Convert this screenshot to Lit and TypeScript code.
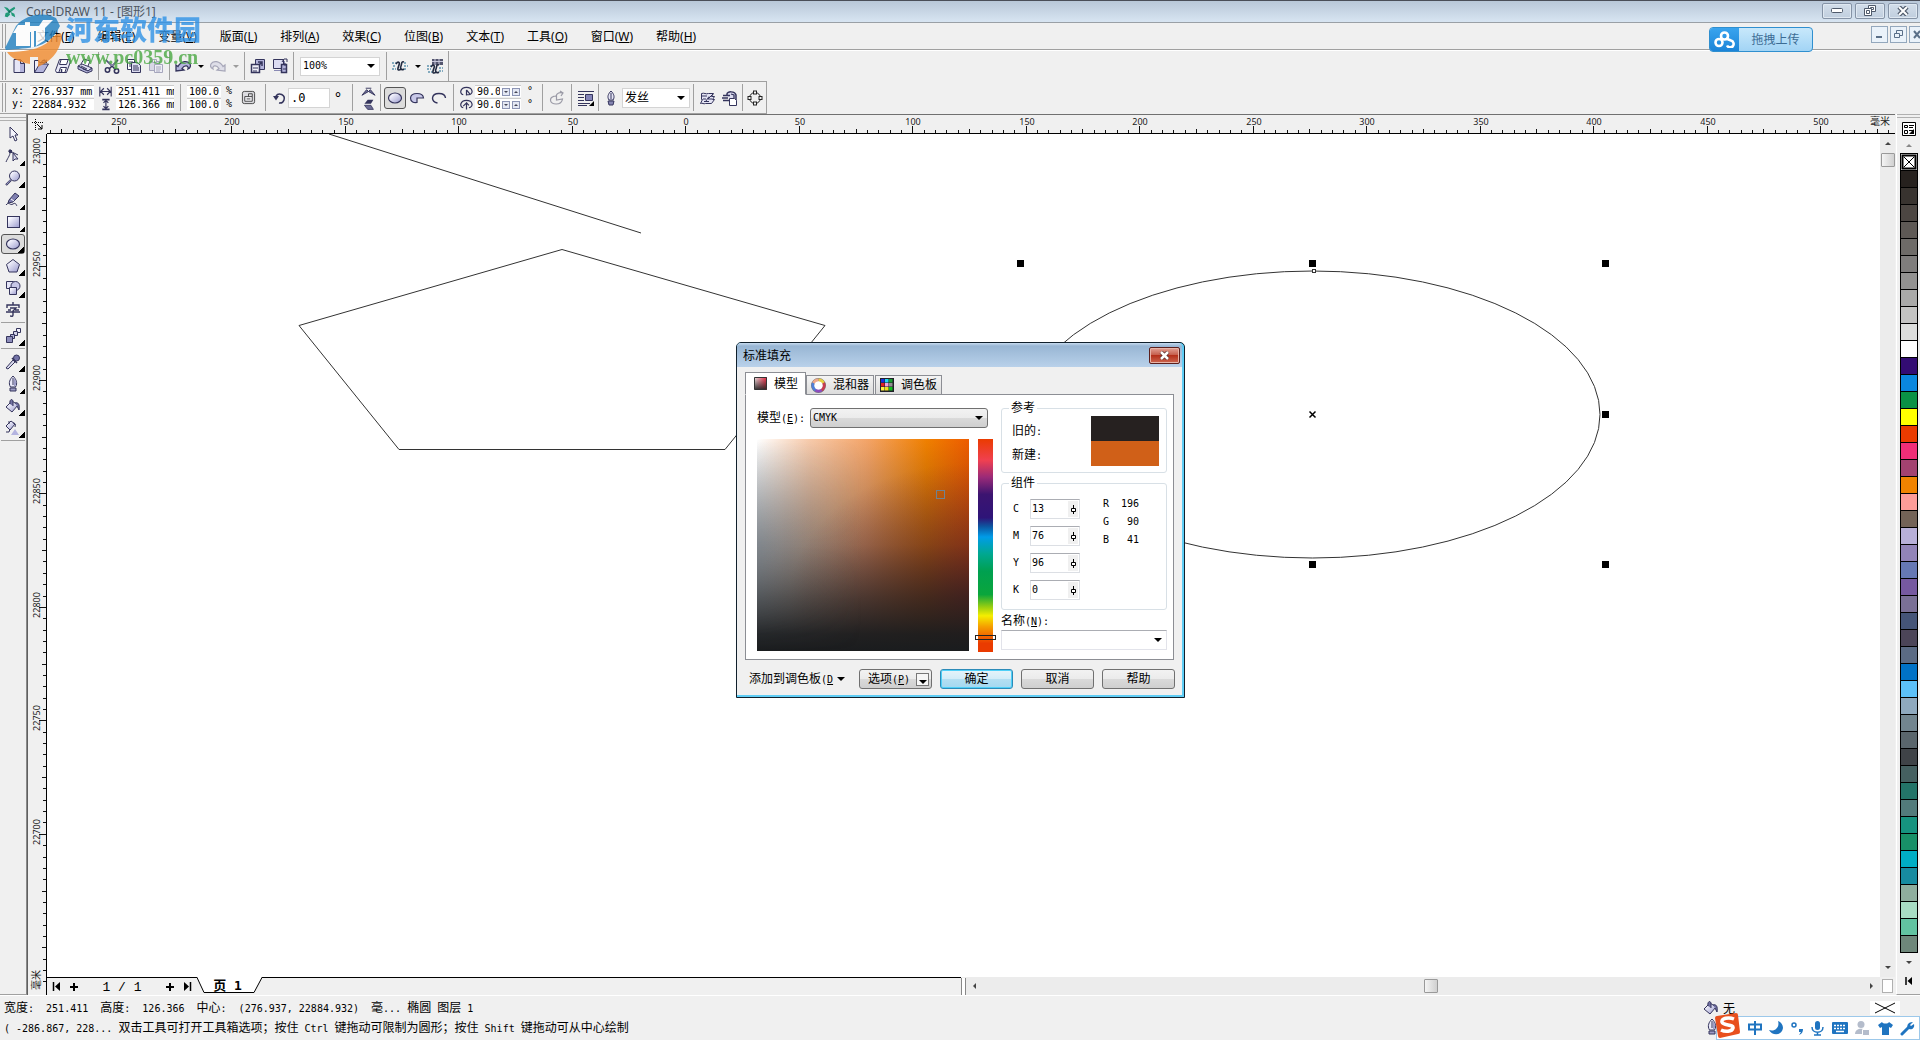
import { LitElement, html, svg, css, TemplateResult, SVGTemplateResult } from "lit";
import { customElement, property } from "lit/decorators.js";

const INK = "#34345c";
const TINT = "#b4b4dc";

const ICONS: Record<string, SVGTemplateResult> = {
  app: svg`<g fill="#1f9a78"><path d="M1 2l4 1 3 3-2 2zM13 2l-5 3 1 3 5-4zM2 13l1-4 4-1 1 3-3 3zM9 8l4 2 1 4-4-2z"/></g><circle cx="7.500" cy="7.500" r="1.500" fill="#0c6d59"/>`,
  new: svg`<path d="M3 1.500h6.500l4 3.500v9.500h-10.500z" fill="#e6e6f6"/><path d="M9 4v10h4.500V5z" fill="${TINT}"/><path d="M9.500 1.500H3v13h10.500V5.500zM9.500 1.500v4h4" fill="none" stroke="${INK}"/>`,
  open: svg`<path d="M1.500 2.500h4l1 2h5l-5 10h-5z" fill="#eeeef8" stroke="${INK}"/><path d="M1.500 14.500L6.500 6h9l-5 8.500z" fill="${TINT}" stroke="${INK}"/><path d="M8 4c2-3 4-3 5-1l1-2v4h-4l2-1c-1-1-2-1-3 0z" fill="${INK}"/>`,
  save: svg`<path d="M4.500 1.500h10l1 2-4 11h-10l-1-2z" fill="#e8e8f6" stroke="${INK}"/><path d="M6 2l-1.500 4.500h7L13 2M4 14l1.500-4.500h6L10 14" fill="#fff" stroke="${INK}"/><path d="M6.500 11v3" stroke="${INK}" stroke-width="1.500"/>`,
  print: svg`<path d="M4 6l3-5 6 2-2 5" fill="#fff" stroke="${INK}"/><path d="M1 8l4-2 10 4-4 3z" fill="#e0e0f2" stroke="${INK}"/><path d="M1 8v3l9 4 5-2v-3l-4 3z" fill="${TINT}" stroke="${INK}"/><path d="M4 8l6 3M6 11l3 1" stroke="${INK}"/>`,
  cut: svg`<path d="M2 2l10 10M14 2L5 11" stroke="${INK}" stroke-width="1.600"/><path d="M2 1l6 7M14 1L8 8" stroke="#8a8ab4"/><circle cx="3.500" cy="12" r="2.200" fill="none" stroke="${INK}" stroke-width="1.500"/><circle cx="12.500" cy="13" r="2.200" fill="none" stroke="${INK}" stroke-width="1.500"/>`,
  copy: svg`<path d="M1.500 1.500h7v10h-7z" fill="#fff" stroke="${INK}"/><path d="M3 4h4M3 6h4M3 8h4" stroke="${INK}"/><path d="M5.500 4.500h6l3 3v7h-9z" fill="#dcdcf0" stroke="${INK}"/><path d="M7 8h5M7 10h6M7 12h6" stroke="${INK}"/>`,
  paste: svg`<g stroke="#a6a6bc"><path d="M1.500 3.500h10v9h-10z" fill="#d8d8e6"/><path d="M4.500 1.500h4v3h-4z" fill="#eee"/><path d="M6.500 6.500h8v8h-8z" fill="#eeeef6"/><path d="M8 9h5M8 11h5M8 13h4"/></g>`,
  undo: svg`<path d="M1 13l0-6 2 1.500C6 3 13 2 15 6c1 2 0 4-2 5 1-3-3-5-6-.500L9 12z" fill="${TINT}" stroke="${INK}" stroke-width="1.300"/>`,
  redo: svg`<path d="M15 13l0-6-2 1.500C10 3 3 2 1 6c-1 2 0 4 2 5-1-3 3-5 6-.500L7 12z" fill="#dedee8" stroke="#a6a6b8" stroke-width="1.200"/>`,
  import: svg`<path d="M5.500 1.500h9v10h-9z" fill="${TINT}" stroke="${INK}"/><path d="M8 4h4v4M12 4L8 8" stroke="${INK}" stroke-width="1.500" fill="none"/><path d="M1.500 6.500h8v8h-8z" fill="#f0f0fa" stroke="${INK}" stroke-width="1.500"/><path d="M3 10h5M4 12v2M6 12v2" stroke="${INK}"/>`,
  export: svg`<path d="M1.500 1.500h10v9h-10z" fill="#dcdcf2" stroke="${INK}"/><path d="M2 12.500h7M12.500 3v3" stroke="#8a8ab4"/><path d="M9.500 6.500h5v8h-5z" fill="${TINT}" stroke="${INK}" stroke-width="1.500"/><path d="M11 11h3M10 4l2-3h3v3M13 8v-3" stroke="${INK}" fill="none"/>`,
  launch: svg`<path d="M0 5h4M1 8h3M0 11h4M12 5h3M12 8h4M12 11h3" stroke="#5f93ad" stroke-width="1.500" stroke-dasharray="2 1"/><path d="M4 6c2-3 4-2 3 1s-2 5 0 5 2-1 2-2M12 4c-3-1-2 2-3 4s0 5 3 3" stroke="#222a40" stroke-width="1.600" fill="none"/>`,
  web: svg`<path d="M5 1h11v6H5z" fill="#54566e"/><path d="M5 3.500h11M8 1v6M12 1v6" stroke="#c8c8dc"/><path d="M0 8h4M0 11h4M1 14h4M12 10h4M12 13h4" stroke="#5f93ad" stroke-width="1.500" stroke-dasharray="2 1"/><path d="M4 9c2-3 4-2 3 1s-2 5 0 5 2-1 2-2M12 7c-3-1-2 2-3 4s0 5 3 3" stroke="#222a40" stroke-width="1.600" fill="none"/>`,
  width: svg`<path d="M1 2v12M15 2v12M2 8h12M6 4L2 8l4 4M10 4l4 4-4 4" fill="none" stroke="${INK}" stroke-width="1.400"/>`,
  height: svg`<path d="M4 2h9M4 14h9" stroke="${INK}" stroke-width="2"/><path d="M8.500 2v12M5.500 6l3-3 3 3M5.500 10l3 3 3-3" fill="none" stroke="${INK}" stroke-width="1.500"/>`,
  lock: svg`<rect x="1.500" y="1.500" width="13" height="13" rx="2" fill="#dcdce0" stroke="#444"/><path d="M4 7h8v5H4z" fill="#f4f4f8" stroke="#444"/><path d="M8 7V4h4v3M6 9.500h4" fill="none" stroke="#444"/>`,
  rotate: svg`<path d="M4 6a4.500 4.500 0 1 1 3 7" fill="none" stroke="${INK}" stroke-width="1.500"/><path d="M1 6h6l-3 4.500z" fill="${INK}"/>`,
  mirrorh: svg`<path d="M1 12L6 6l2 2zM15 12l-5-6-2 2z" fill="#6c6c94" stroke="${INK}"/><path d="M5 4.500h6" stroke="${INK}"/>`,
  mirrorv: svg`<path d="M14 2H7L3 7h8z" fill="${INK}"/><path d="M14 14H7L3 9h8z" fill="#6c6c94" stroke="${INK}"/>`,
  ellipse: svg`<ellipse cx="8" cy="8" rx="6.500" ry="5" fill="url(#lav)" stroke="${INK}" stroke-width="1.200"/>`,
  pie: svg`<path d="M8 8h6.500C14 2 2 2 1.500 8 1.500 12 5 13 8 12.500z" fill="#c8c8e8" stroke="${INK}" stroke-width="1.200"/>`,
  arc: svg`<path d="M14.500 8C14 2 2 2 1.500 8c0 3 2 4.500 5 5" fill="none" stroke="${INK}" stroke-width="1.400"/>`,
  ang1: svg`<path d="M8 6v7M8 6l4 5M4 12C-1 11 0 3 8 3s9 8 3 9H8" fill="none" stroke="${INK}" stroke-width="1.500"/>`,
  ang2: svg`<path d="M8 14V6L4 10M8 6l3 3M4 12C-1 11 0 3 8 3s9 8 3 9" fill="none" stroke="${INK}" stroke-width="1.500"/>`,
  cw: svg`<path d="M13.500 9c-1 7-12 6-12 1 0-3 3-4 6-4v4zM7 6c1-3 4-4 6-3M11 1l3 2-2 3" fill="none" stroke="#9a9aa6" stroke-width="1.200"/>`,
  wrap: svg`<path d="M0 1.500h16M0 4.500h6M0 7.500h6M0 10.500h6M0 13.500h12M0 15.500h9" stroke="${INK}"/><path d="M7.500 4.500h7v6h-7z" fill="#8484b8" stroke="${INK}"/><path d="M16 11v5h-5z"/>`,
  pen: svg`<path d="M8 1c3 3 4 6 2 9H6C4 7 5 4 8 1z" fill="#e4e4f4" stroke="${INK}"/><path d="M8 3v6M5 11h6l-1 4H6z" stroke="${INK}" fill="#8484b0"/>`,
  nib: svg`<path d="M8 0c3 3 5 7 2.500 11h-5C3 7 5 3 8 0z" fill="#e8e8f8" stroke="${INK}"/><path d="M8 2v7M5 12h6v3H5z" stroke="${INK}" fill="#9c9cc4"/><path d="M9 2c2 3 3 6 1 8H9z" fill="#9c9cc8"/>`,
  front: svg`<path d="M1.500 3.500c3-1 4 1 7 0h5l-2 3h3l-2 3h2l-3 4h-6c-2 1-3-1-5 0l2-4h-1z" fill="#e4e4f4" stroke="${INK}"/><path d="M2 6h5M3 9h3M4 11.500h5M9 6.500L6 11M13 4L8 9h4" stroke="${INK}" fill="none"/>`,
  back: svg`<path d="M5 6V4c0-3 8-3 9 1v8" fill="#dcdcf0" stroke="${INK}" stroke-width="1.500"/><path d="M7.500 8.500h5l2 2v5h-7z" fill="#fff" stroke="${INK}"/><path d="M1 5.500h7M0 8h6M1 10.500h6M9 4l3 1v3" fill="none" stroke="${INK}" stroke-width="1.300"/>`,
  curves: svg`<circle cx="8" cy="8" r="5.500" fill="none" stroke="#222"/><g fill="#f4f4f4" stroke="#222"><rect x="6.500" y="1" width="3" height="3"/><rect x="6.500" y="12" width="3" height="3"/><rect x="1" y="6.500" width="3" height="3"/><rect x="12" y="6.500" width="3" height="3"/></g>`,
  pick: svg`<path d="M5 1v11l3-2 2 5 2-1-2-5h3z" fill="#f4f4fc" stroke="${INK}"/>`,
  shape: svg`<path d="M1 14C3 9 6 7 5 1M3 3l4 1 6 3" fill="none" stroke="${INK}"/><path d="M8 5v8l2-2h3z" fill="#d8d8ee" stroke="${INK}"/><rect x="4" y="2" width="3" height="3" fill="${INK}"/>`,
  zoom: svg`<circle cx="9.500" cy="6" r="5" fill="url(#lav)" stroke="${INK}"/><path d="M6 10L1 15" stroke="${INK}" stroke-width="2.200"/><path d="M5.500 10L1.500 14.500" stroke="#a0a0cc"/>`,
  draw: svg`<path d="M4 8l6-7 4 3-6 6-5 1z" fill="#8080b0" stroke="${INK}"/><path d="M6 7l3 2" stroke="#fff"/><path d="M1 13c3-4 4 1 7-1s3 1 4 2" fill="none" stroke="${INK}"/>`,
  rect: svg`<rect x="2.500" y="2.500" width="12" height="11" fill="url(#lav)" stroke="${INK}"/>`,
  poly: svg`<path d="M8 1.500l6.500 5-2.500 7.500H4L1.500 6.500z" fill="url(#lav)" stroke="${INK}"/>`,
  basic: svg`<path d="M1.500 1.500h7v7h-7z" fill="#e4e4f6" stroke="${INK}"/><circle cx="10.500" cy="6" r="4.500" fill="#c8c8e8" stroke="${INK}"/><path d="M4.500 7.500h7v7h-7z" fill="url(#lav)" stroke="${INK}"/>`,
  text: svg`<path d="M8 0v3M2 6V3h12v3M5 6h6L8 9v4c0 2-2 1-3 1M1 10h14M3 8h3M10 8h4" fill="none" stroke="${INK}" stroke-width="1.400"/>`,
  blend: svg`<g stroke="${INK}"><path d="M11.500.500h4v4h-4z" fill="#f0f0fa"/><path d="M8.500 3.500h4v4h-4z" fill="#d4d4ea"/><path d="M5.500 6.500h4v4h-4z" fill="#b0b0d4"/><path d="M1.500 8.500h6v6h-6z" fill="#8c8cba"/></g>`,
  dropper: svg`<path d="M1 14l7-8 2 2-7 7z" fill="#d8d8ec" stroke="${INK}"/><circle cx="11.500" cy="4" r="3" fill="#7474a8" stroke="${INK}"/><path d="M7 4l5 5" stroke="${INK}" stroke-width="1.500"/>`,
  fill: svg`<path d="M1 9l6-6 6 4-6 7z" fill="url(#lav)" stroke="${INK}"/><path d="M5 6c-1-5 3-6 3-2v4M10 5c3-1 5 1 4 7-1-1-1-3-2-4" fill="#7272a4" stroke="${INK}"/>`,
  ifill: svg`<path d="M1 6l5-5 4 3-5 6z" fill="url(#lav)" stroke="${INK}"/><path d="M8 3c2 0 3 1 2 4M4 4V1" fill="none" stroke="${INK}"/><path d="M1 12h3l1-3" fill="none" stroke="${INK}"/><path d="M10 9l4 6H6z" fill="#b4b4e0"/>`,
};

const icon = (name: string, size = 16, flyout = false): TemplateResult => html`
  <svg class="ic" width=${size} height=${size} viewBox="0 0 16 16" aria-hidden="true">
    <defs><linearGradient id="lav" x1="0" y1="0" x2="1" y2="1"><stop offset=".2" stop-color="#f6f6fe"/><stop offset="1" stop-color="#9898cc"/></linearGradient></defs>
    ${ICONS[name]}
  </svg>${flyout ? html`<i class="fly"></i>` : ""}`;

/* Sets Latin runs in the half-width face and leaves Chinese runs at full size. */
const mix = (text: string) =>
  text.split(/([\u3000-\uffef]+)/).map((run, i) => (i % 2 ? run : run ? html`<span class="l">${run}</span>` : ""));

const keyed = (label: string, key: string, tail = "") => html`${label}<span class="l">(<u>${key}</u>)${tail}</span>`;

const MENUS: [string, string][] = [
  ["文件", "F"], ["编辑", "E"], ["变量", "V"], ["版面", "L"], ["排列", "A"], ["效果", "C"],
  ["位图", "B"], ["文本", "T"], ["工具", "O"], ["窗口", "W"], ["帮助", "H"],
];

const PALETTE = (
  "26211e 38332f 4c4642 5e5955 6e6b68 7f7d7c 939291 a9a9a8 c3c3c2 dcdddc ffffff 330c73 0a87de 0a9245 ffff00 ea3b00 " +
  "f02e77 a34270 f08300 fc9c98 736357 b8b0d8 9284b8 6678b4 7659a0 7a7096 455578 4c4558 5b6b84 0072c6 5cc0f8 8fa9be " +
  "72858f 5a666c 3f4347 456060 237468 527b7b 16937f 189068 00adc4 178ba0 8fae9e a8dcc4 62c3a1 6e877a"
).split(" ");

const shared = css`
  * { box-sizing: border-box; }
  button, input, select { font: inherit; color: inherit; margin: 0; padding: 0; border: 0; border-radius: 0; background: none; min-width: 0; }
  select { appearance: none; }
  svg { display: block; }
  .l { font-family: "DejaVu Sans Mono", monospace; font-size: 10px; line-height: 1; white-space: pre; }
  .combo { display: inline-grid; align-items: center; }
  .combo > * { grid-area: 1 / 1; }
  .combo select { width: 100%; height: 100%; padding-left: 2px; }
  .combo i, .tri { width: 0; height: 0; border: 4px solid transparent; border-top-color: #000; border-bottom: 0; }
  .combo i { justify-self: end; margin-right: 4px; pointer-events: none; }
`;

@customElement("hue-dialog")
export class HueDialog extends LitElement {
  static styles = [shared, css`
    :host { box-sizing: border-box; display: block; width: 449px; border: 1px solid #10202c; border-radius: 5px 5px 0 0; font: 12px/16px "DejaVu Sans Mono", "Noto Sans CJK SC", sans-serif; color: #000; background: #5fcdf5; padding: 0 2px 2px 0; }
    header { display: flex; align-items: center; justify-content: space-between; height: 24px; padding: 0 2px 0 6px; background: linear-gradient(#c8dcf0 0, #98b6d4 3px, #b9d1ea); border-radius: 4px 4px 0 0; }
    header h2 { margin: 0; font: 12px/16px "Noto Sans CJK SC", sans-serif; }
    .x { width: 31px; height: 17px; border: 1px solid #5c1f1c; border-radius: 2px; background: linear-gradient(#e3a194, #c6604e 45%, #b5301b 50%, #cc6750); display: grid; place-items: center; box-shadow: inset 0 0 0 1px #e8b4a8; }
    .body { background: #f0f0f0; padding: 5px 8px 6px; }
    .tabs { display: flex; align-items: flex-end; height: 23px; margin-bottom: -1px; }
    .tab { display: flex; align-items: center; gap: 7px; height: 20px; padding: 0 4px; border: 1px solid #8c8e94; margin-right: 1px; background: linear-gradient(#f4f4f4, #dcdcdc); white-space: nowrap; }
    .tab.on { height: 23px; background: #fff; border-bottom-color: #fff; padding: 0 7px 0 8px; margin-right: 0; position: relative; }
    .panel { display: grid; grid-template-columns: auto 1fr; gap: 5px; border: 1px solid #8c8e94; background: #fff; padding: 13px 6px 7px 11px; }
    .left { display: grid; grid-template-columns: 212px 21px; column-gap: 6px; row-gap: 11px; align-content: start; }
    .model { grid-column: 1 / 3; display: flex; align-items: center; justify-content: space-between; padding-right: 8px; height: 20px; }
    .model .combo { width: 178px; height: 20px; border: 1px solid #707070; border-radius: 3px; background: linear-gradient(#f2f2f2, #ebebeb 50%, #dadada 50%, #cfcfcf); }
    .combo select { font: 10px/14px "DejaVu Sans Mono", monospace; }
    .field { position: relative; height: 212px; background:
      linear-gradient(rgba(26,28,30,0), rgba(26,28,30,.38) 50%, rgba(26,28,30,.74) 75%, rgba(26,28,30,.96) 92%, #1a1c1e),
      radial-gradient(ellipse at 100% 75%, rgba(110,10,60,.55), rgba(130,20,50,0) 60%),
      linear-gradient(90deg, #fff, #f8cbab 25%, #f4a468 52%, #f08000 80%, #ee5c00); }
    .field::before { content: ""; display: block; height: 100%; background: linear-gradient(90deg, rgba(70,85,100,.4), rgba(70,85,100,0) 50%); -webkit-mask-image: linear-gradient(transparent, #000 50%, transparent); mask-image: linear-gradient(transparent, #000 50%, transparent); }
    .pin { position: absolute; left: 179px; top: 51px; width: 9px; height: 9px; border: 1px solid #6f8290; }
    .hue { appearance: none; writing-mode: vertical-lr; width: 21px; height: 213px; background: linear-gradient(#ea3b00, #f04050 10%, #9a2a78 18%, #3c1470 26%, #2e1478 37%, #0d55a0 41%, #009ce8 46%, #00a890 54%, #00a050 62%, #0aa63c 73%, #9ccf10 79%, #f5ee00 83%, #f5a000 88%, #f06000 93%, #ea3b00 96%) center / 15px 100% no-repeat; }
    .hue::-webkit-slider-thumb { appearance: none; width: 21px; height: 5px; border: 1px solid #222; background: linear-gradient(90deg, #fff 2px, transparent 2px, transparent 17px, #fff 17px); }
    .right { display: flex; flex-direction: column; }
    fieldset { margin: 0; padding: 0 7px 0 10px; border: 1px solid #d8e0e6; border-radius: 3px; min-width: 0; }
    legend { margin-left: -3px; padding: 0 2px; line-height: 16px; }
    .ref { height: 73px; margin-top: -8px; display: block; }
    .refrow { display: flex; justify-content: space-between; }
    .refrow p { margin: 0; padding-top: 7px; height: 24px; line-height: 16px; }
    .chips { width: 68px; height: 50px; background: linear-gradient(#262120 50%, #d06018 50%); }
    .comp { height: 135px; margin-top: 2px; }
    .comprow { display: flex; gap: 23px; }
    .chan { display: grid; gap: 7px; font-size: 10px; padding-top: 8px; }
    .chan label { display: grid; grid-template-columns: 17px 50px; align-items: center; height: 20px; padding-left: 1px; }
    .spin { display: flex; height: 20px; border: 1px solid #dcdfe4; border-top-color: #abadb3; }
    .spin input { width: 36px; padding-left: 1px; }
    .spin button { width: 10px; background: #f0f0f0; margin: 1px; display: grid; place-items: center; }
    .rgb { margin: 0; padding-top: 4px; display: grid; grid-template-columns: 6px 30px; font-size: 10px; grid-auto-rows: 18px; align-content: start; line-height: 18px; }
    .rgb dd, .rgb dt { margin: 0; }
    .rgb dd { text-align: right; }
    .name { display: grid; grid-template-rows: 16px 20px; gap: 1px; padding-top: 3px; }
    .name .combo { height: 20px; border: 1px solid #e2e3ea; border-top-color: #abadb3; }
    footer { display: flex; align-items: center; gap: 8px; padding: 9px 0 0 4px; margin-right: -2px; }
    footer button { height: 20px; flex: 0 0 73px; border: 1px solid #707070; border-radius: 3px; background: linear-gradient(#f2f2f2, #ebebeb 50%, #dadada 50%, #cfcfcf); white-space: nowrap; }
    footer .add { flex: 0 0 102px; border: 0; background: none; display: flex; align-items: center; gap: 4px; }
    footer .opt { display: flex; align-items: center; justify-content: space-between; padding: 0 2px 0 8px; }
    footer .opt b { width: 13px; height: 13px; border: 1px solid #777; display: grid; place-items: end center; background: #f6f6f6; padding-bottom: 1px; }
    footer .ok { border-color: #2c8bb8; background: linear-gradient(#e6f4fa, #d2ecf8 50%, #b4dff2 50%, #a4d8f0); box-shadow: inset 0 0 0 1px #4fd0f8; }
  `];

  render() {
    const chans: [string, string][] = [["C", "13"], ["M", "76"], ["Y", "96"], ["K", "0"]];
    return html`
      <header>
        <h2>标准填充</h2>
        <button class="x" aria-label="关闭"><svg width="11" height="9" viewBox="0 0 11 9"><path d="M2 1l7 7M9 1L2 8" stroke="#5a3030" stroke-width="4"/><path d="M2 1l7 7M9 1L2 8" stroke="#fff" stroke-width="2.500"/></svg></button>
      </header>
      <div class="body">
        <div class="tabs" role="tablist">
          <button class="tab on" role="tab" aria-selected="true">
            <svg width="13" height="13" viewBox="0 0 13 13"><defs><linearGradient id="m1" x2="1"><stop stop-color="#eee"/><stop offset="1" stop-color="#f0203c"/></linearGradient><linearGradient id="m2" x2="0" y2="1"><stop stop-color="#222" stop-opacity="0"/><stop offset="1" stop-color="#222" stop-opacity=".9"/></linearGradient></defs><path d="M0 0h13v13H0z" fill="url(#m1)"/><path d="M.5.500h12v12H.5z" fill="url(#m2)" stroke="#333"/></svg>模型
          </button>
          <button class="tab" role="tab" aria-selected="false">
            <svg width="15" height="15" viewBox="0 0 15 15" fill="none" stroke-width="3"><circle cx="7.500" cy="7.500" r="6" stroke="#777" stroke-width="3"/><path d="M7.500 2a5.500 5.500 0 0 1 5 3" stroke="#e8d040"/><path d="M12.500 5a5.500 5.500 0 0 1-2 7" stroke="#c83c50"/><path d="M10.500 12a5.500 5.500 0 0 1-6 0" stroke="#8c4cc0"/><path d="M4.500 12a5.500 5.500 0 0 1-2-7" stroke="#5080d8"/><path d="M2.500 5a5.500 5.500 0 0 1 5-3" stroke="#f0a888"/><circle cx="7.500" cy="7.500" r="4" fill="#fff"/></svg>混和器
          </button>
          <button class="tab" role="tab" aria-selected="false">
            <svg width="14" height="14" viewBox="0 0 14 14"><path d="M0 0h14v14H0z" fill="#202028"/>
              ${["#1830e0", "#20d8f0", "#18a030", "#e02020", "#f0a0e0", "#909090", "#fff040", "#f0e020", "#10c020"].map((c, i) => svg`<path d="M${1 + (i % 3) * 4} ${1 + Math.floor(i / 3) * 4}h3.500v3.500h-3.500z" fill=${c}></path>`)}
            </svg>调色板
          </button>
        </div>
        <div class="panel">
          <div class="left">
            <div class="model">
              <label for="model">${keyed("模型", "E", ":")}</label>
              <span class="combo"><select id="model"><option>CMYK</option></select><i></i></span>
            </div>
            <div class="field"><span class="pin"></span></div>
            <input class="hue" type="range" min="0" max="100" value="94" aria-label="色相">
          </div>
          <div class="right">
            <fieldset class="ref">
              <legend>参考</legend>
              <div class="refrow"><div><p>旧的<span class="l">:</span></p><p>新建<span class="l">:</span></p></div><div class="chips"></div></div>
            </fieldset>
            <fieldset class="comp">
              <legend>组件</legend>
              <div class="comprow">
                <div class="chan">
                  ${chans.map(([n, v]) => html`<label>${n}<span class="spin"><input .value=${v} aria-label=${n}><button tabindex="-1" aria-label="调整 ${n}"><svg width="5" height="9" viewBox="0 0 5 9"><path d="M2.500 0v9" stroke="#000"/><path d="M.5 3.500h4v3h-4z" fill="#fff" stroke="#000"/></svg></button></span></label>`)}
                </div>
                <dl class="rgb"><dt>R</dt><dd>196</dd><dt>G</dt><dd>90</dd><dt>B</dt><dd>41</dd></dl>
              </div>
            </fieldset>
            <div class="name">
              <label for="cname">${keyed("名称", "N", ":")}</label>
              <span class="combo"><select id="cname"><option></option></select><i></i></span>
            </div>
          </div>
        </div>
        <footer>
          <button class="add"><span>添加到调色板<span class="l">(<u>D</u></span></span><i class="tri"></i></button>
          <button class="opt"><span>${keyed("选项", "P")}</span><b><i class="tri"></i></b></button>
          <button class="ok">确定</button><button>取消</button><button>帮助</button>
        </footer>
      </div>`;
  }
}

@customElement("unit-ruler")
export class UnitRuler extends LitElement {
  @property({ type: Boolean }) vertical = false;

  static styles = css`
    :host { box-sizing: border-box; display: block; overflow: hidden; background: #f0f0f0; min-width: 0; min-height: 0; }
    svg { display: block; width: 100%; height: 100%; overflow: visible; }
    text { font: 9px "Noto Sans", sans-serif; fill: #222; text-anchor: middle; }
    .unit { font: 10px "Noto Sans CJK SC", sans-serif; }
    .end { text-anchor: end; }
  `;

  render() {
    const step = 113.47;
    const ticks: SVGTemplateResult[] = [];
    const v = this.vertical;
    const origin = v ? 19 : 71;
    const labels = v ? 6 : 15;
    for (let n = -9; n <= 160; n++) {
      const p = Math.round(origin + (n * step) / 10);
      if (p < 2 || (v && p > 858)) continue;
      const labelled = n % 10 === 0 && n / 10 <= labels;
      const len = labelled ? 7 : n % 5 === 0 ? 4 : 3;
      ticks.push(v
        ? svg`<path d="M${18 - len} ${p}.5h${len}" stroke="#111"></path>`
        : svg`<path d="M${p}.5 ${18 - len}v${len}" stroke="#111"></path>`);
      if (labelled) {
        const k = n / 10;
        ticks.push(v
          ? svg`<text transform="translate(12 ${p - 2}) rotate(-90)">${23000 - k * 50}</text>`
          : svg`<text x=${p + 1} y="10">${Math.abs(250 - k * 50)}</text>`);
      }
    }
    return html`<svg aria-hidden="true">${ticks}${v
      ? svg`<svg y="100%"><text class="unit" transform="translate(12 -15) rotate(-90)">毫米</text></svg>`
      : svg`<text class="unit end" x="100%" dx="-5" y="10">毫米</text>`}</svg>`;
  }
}

@customElement("app-root")
export class AppRoot extends LitElement {
  static styles = [shared, css`
    :host { position: relative; display: flex; flex-direction: column; min-height: 100vh; box-sizing: border-box; overflow: hidden; background: #f0f0f0; color: #000; font: 12px/16px "Noto Sans", "Noto Sans CJK SC", sans-serif; }
    .title { display: flex; align-items: center; height: 23px; border-top: 1px solid #4a4e58; border-bottom: 1px solid #9aa0a6; background: linear-gradient(#b8c7d8, #d8e5f2); padding-left: 3px; gap: 9px; color: #4c5560; }
    .title h1 { margin: 0; font: inherit; flex: 1; }
    .wins { display: flex; gap: 3px; padding: 0 2px 2px 0; }
    .wins button { width: 30px; height: 16px; border: 1px solid #8593a6; border-radius: 2px; display: grid; place-items: center; background: linear-gradient(#d3deea, #c0cede); box-shadow: inset 0 0 0 1px #dfe8f1; }
    .menu { display: flex; align-items: center; height: 27px; border-bottom: 1px solid #a0a0a0; padding-left: 2px; }
    .grip { align-self: stretch; width: 4px; border-left: 1px solid #a0a0a0; border-right: 1px solid #a0a0a0; margin: 1px 0; }
    .menu nav { display: flex; gap: 23px; padding: 2px 0 0 31px; flex: 1; }
    .menu a { color: inherit; text-decoration: none; white-space: nowrap; }
    .mdi { display: flex; gap: 2px; margin-right: -6px; padding-bottom: 4px; }
    .mdi button { width: 17px; height: 17px; border: 1px solid #93a7bc; background: #eaf2fa; display: grid; place-items: center; }
    .bar { display: flex; align-items: center; height: 31px; padding-left: 2px; border-top: 1px solid #fff; }
    .bar hr { width: 1px; height: 28px; border: 0; margin: 0 2px; background: #a0a0a0; flex: none; }
    .group { display: flex; align-items: center; padding: 0 2px; height: 30px; border-right: 1px solid #a0a0a0; }
    .tb { width: 22px; height: 22px; display: grid; place-items: center; flex: none; }
    .drop { width: 13px; height: 24px; display: grid; place-items: center; }
    .drop.off { opacity: .35; }
    .drop .tri { border-width: 3px; border-bottom: 0; }
    .zoom { width: 80px; height: 19px; background: #fff; border: 1px solid #d4d4d4; margin: 0 4px; font: 10px/14px "DejaVu Sans Mono", monospace; }
    .prop { display: flex; align-items: center; height: 33px; padding-left: 2px; border: solid #a0a0a0; border-width: 1px 1px 1px 0; width: max-content; }
    .prop hr { width: 1px; height: 27px; border: 0; background: #a0a0a0; margin: 0 3px; flex: none; }
    .prop hr.m6 { margin: 0 6px; }
    .prop hr.m1 { margin: 0 1px; }
    .w13 { width: 13px; } .w16 { width: 16px; } .w18 { width: 18px; } .w22 { width: 22px; } .w24 { width: 24px; }
    .w34 { width: 34px; } .w58 { width: 58px; } .w64 { width: 64px; }
    .stack { display: grid; grid-auto-rows: 13px; align-items: center; font: 10px/12px "DejaVu Sans Mono", monospace; }
    .stack input, .stack .sp { background: #fff; height: 12px; border-top: 1px solid #ccc; padding-left: 2px; overflow: hidden; width: 100%; }
    .stack svg { margin: auto; }
    .stack label, .stack .o { display: block; text-align: center; }
    .stack .sp { display: flex; align-items: center; gap: 2px; width: 46px; }
    .stack .sp input { width: 23px; border: 0; padding: 0; }
    .sp button { width: 8px; height: 8px; border: 1px solid #8c94b4; background: #e4e8f4; display: grid; place-items: center; }
    .sp button i { border: 2px solid transparent; border-top-color: #445; border-bottom: 0; }
    .sp button i.up { border: 2px solid transparent; border-bottom-color: #445; border-top: 0; }
    .rot { width: 42px; height: 20px; background: #fff; border: 1px solid #d4d4d4; padding-left: 2px; font: 12px/16px "DejaVu Sans Mono", monospace; }
    .deg { width: 16px; text-align: center; font-size: 14px; }
    .pressed { border: 1px solid #555; border-radius: 3px; background: #dcdcdc; }
    .line { width: 68px; height: 20px; background: #fff; border: 1px solid #d4d4d4; }
    .work { flex: 1; display: flex; min-height: 0; }
    .tools { width: 27px; flex: none; display: flex; flex-direction: column; align-items: center; padding-top: 3px; border-right: 1px solid #8a8a8a; border-bottom: 1px solid #a0a0a0; }
    .tools hr { width: 24px; height: 1px; border: 0; margin: 1px 0; background: #a0a0a0; flex: none; }
    .tools .cap { width: 100%; height: 4px; border-top: 1px solid #b0b0b0; border-bottom: 1px solid #b0b0b0; margin: 0 0 2px; background: none; }
    .tool { width: 24px; height: 22px; flex: none; display: grid; align-items: center; justify-items: center; padding-bottom: 1px; }
    .tool > * { grid-area: 1 / 1; }
    .tool.pressed { height: 20px; margin: 1px 0; padding: 0; }
    .gap { height: 1px; }
    .fly { align-self: end; justify-self: end; width: 6px; height: 6px; background: linear-gradient(135deg, transparent 50%, #000 50%); }
    .doc { flex: 1; min-width: 0; display: grid; grid-template: 19px 1fr 18px / 19px 1fr 15px; border-left: 1px solid #606060; border-top: 1px solid #707070; }
    .corner { display: grid; place-items: center; }
    .hr { grid-column: 2 / 4; border-bottom: 1px solid #000; }
    .vr { grid-row: 2 / 4; grid-column: 1; border-right: 1px solid #000; }
    .canvas { background: #fff; overflow: hidden; min-width: 0; min-height: 0; position: relative; }
    .canvas svg { position: absolute; }
    .vs { background: #ececec; display: flex; flex-direction: column; align-items: center; padding: 8px 0; }
    .arr { width: 0; height: 0; border: 3px solid transparent; }
    .arr.up { border-bottom-color: #444; border-top: 0; } .arr.dn { border-top-color: #444; border-bottom: 0; }
    .arr.lf { border-right-color: #444; border-left: 0; } .arr.rt { border-left-color: #444; border-right: 0; }
    .pal .arr.up { border-bottom-color: #888; }
    .thumb { width: 14px; height: 14px; border: 1px solid #999; border-radius: 1px; background: linear-gradient(90deg, #f4f4f4, #d0d0d0); }
    .vs .thumb { margin: 8px 0 auto; }
    .pages { grid-column: 2; display: flex; min-width: 0; }
    .pnav { flex: 1; display: flex; border-top: 1px solid #000; min-width: 0; }
    .nums { display: flex; align-items: center; width: 150px; font: 13px/16px "Liberation Mono", monospace; }
    .nums span { flex: 1; text-align: center; padding-top: 3px; }
    .nums button { width: 18px; height: 16px; display: grid; place-items: center; }
    .ptab { display: grid; width: 65px; height: 17px; margin-top: -1px; }
    .ptab > * { grid-area: 1 / 1; }
    .ptab a { place-self: center; padding-right: 4px; color: #000; text-decoration: none; font: bold 13px/16px "DejaVu Sans Mono", "Noto Sans CJK SC", sans-serif; z-index: 1; }
    .split { width: 5px; border-right: 1px solid #888; border-left: 1px solid #888; background: #fff; margin-top: 1px; }
    .hs { flex: 1; display: flex; align-items: center; background: #ececec; min-width: 0; }
    .hs .lf { margin-left: 7px; } .hs .rt { margin-right: 7px; }
    .hs .thumb { margin-left: 49%; margin-right: auto; }
    .nav { border: 1px solid #b0b0b0; background: #fff; margin: 2px; }
    .pal { width: 24px; flex: none; display: flex; flex-direction: column; align-items: center; border-left: 1px solid #fff; margin-left: 1px; border-bottom: 1px solid #a0a0a0; }
    .pal .cap { width: 100%; height: 4px; border-top: 1px solid #b0b0b0; border-bottom: 1px solid #b0b0b0; }
    .pal .opts { margin: 4px 0 8px; }
    .pal ul { list-style: none; margin: 6px 0 0; padding: 0; border: solid #000; border-width: 1px 1px 0; width: 18px; }
    .pal li { height: 17px; border-bottom: 1px solid #000; }
    .pal li button { width: 100%; height: 100%; display: block; }
    .pal .arr.dn { margin: 8px 0 13px; }
    .status { height: 45px; border-top: 1px solid #fff; display: flex; justify-content: space-between; font-family: "Noto Sans CJK SC", sans-serif; padding-left: 4px; }
    .status p { margin: 0; height: 20px; line-height: 20px; white-space: pre; }
    .status p:first-child { margin-top: 1px; }
    .info { width: 217px; display: flex; padding-right: 20px; height: 23px; gap: 4px; align-items: center; }
    .none { width: 30px; height: 14px; background: #fff; margin-left: auto; }
    .nibpos { position: absolute; right: 200px; bottom: 5px; }
    .ime { position: absolute; right: 0; bottom: 0; width: 204px; height: 24px; display: flex; align-items: center; justify-content: space-between; padding: 0 4px 0 31px; background: #fff; border: 1px solid #9cc8ea; }
    .logo { position: absolute; left: -3px; top: -5px; }
    .mark { position: absolute; left: 5px; top: 12px; display: flex; pointer-events: none; opacity: .8; }
    .mark div { display: flex; flex-direction: column; padding-left: 4px; }
    .mark strong { font: 900 27px/34px "Noto Sans CJK SC", sans-serif; color: #2f92e6; white-space: nowrap; }
    .mark span { font: bold 20px/22px "Liberation Serif", serif; color: #4aa843; }
    .upload { position: absolute; right: 107px; top: 27px; width: 104px; height: 25px; display: flex; align-items: center; border: 1px solid #2f8fcf; border-radius: 4px; overflow: hidden; background: linear-gradient(#c8e8fb, #a2d4f5); color: #3c6c94; }
    .upload b { width: 29px; height: 100%; background: linear-gradient(#3aa4ee, #1b84d8); display: grid; place-items: center; }
    .upload span { flex: 1; text-align: center; }
    hue-dialog { position: absolute; left: 736px; top: 342px; }
  `];

  private tb(name: string, label: string) {
    return html`<button class="tb" aria-label=${label}>${icon(name)}</button>`;
  }

  private tool(name: string, label: string, fly = true, pressed = false) {
    return html`<button class="tool ${pressed ? "pressed" : ""}" aria-label=${label}>${icon(name, 16, fly)}</button>`;
  }

  private handles: [number, number][] = [[1020, 263], [1312, 263], [1605, 263], [1605, 414], [1312, 564], [1605, 564], [1020, 564]];

  render() {
    return html`
      <header class="title">
        ${icon("app", 14)}<h1>CorelDRAW 11 - [图形1]</h1>
        <div class="wins">
          <button aria-label="最小化"><svg width="12" height="5"><rect x=".5" y=".5" width="11" height="4" rx="1" fill="#fff" stroke="#4f5a6b"/></svg></button>
          <button aria-label="还原"><svg width="12" height="11" fill="#fff" stroke="#4f5a6b"><path d="M4.500.500h7v6h-7z"/><path d="M6.500 2.500h3v2h-3z"/><path d="M.500 3.500h7v7h-7z"/><path d="M2.500 5.500h3v3h-3z"/></svg></button>
          <button aria-label="关闭"><svg width="12" height="10"><path d="M2 1l8 8M10 1L2 9" stroke="#4f5a6b" stroke-width="4.500"/><path d="M2 1l8 8M10 1L2 9" stroke="#fff" stroke-width="2"/></svg></button>
        </div>
      </header>

      <div class="menu">
        <span class="grip"></span>
        <nav>${MENUS.map(([t, k]) => html`<a href="#">${t}(<u>${k}</u>)</a>`)}</nav>
        <div class="mdi">
          <button aria-label="最小化文档"><svg width="9" height="9"><path d="M1 7h6" stroke="#5a6f88" stroke-width="2"/></svg></button>
          <button aria-label="还原文档"><svg width="9" height="9" fill="none" stroke="#5a6f88"><path d="M2.500 3V.500h6v5H6M.500 3.500h5v4h-5z"/></svg></button>
          <button aria-label="关闭文档"><svg width="9" height="9"><path d="M1 1l6 7M7 1L1 8" stroke="#5a6f88" stroke-width="2"/></svg></button>
        </div>
      </div>

      <div class="bar" role="toolbar">
        <span class="grip"></span>
        <div class="group">
          ${this.tb("new", "新建")}${this.tb("open", "打开")}${this.tb("save", "保存")}${this.tb("print", "打印")}<hr>
          ${this.tb("cut", "剪切")}${this.tb("copy", "复制")}${this.tb("paste", "粘贴")}<hr>
          ${this.tb("undo", "撤消")}<button class="drop" aria-label="撤消列表"><i class="tri"></i></button>
          ${this.tb("redo", "重做")}<button class="drop off" aria-label="重做列表"><i class="tri"></i></button><hr>
          ${this.tb("import", "导入")}${this.tb("export", "导出")}<hr>
          <span class="combo zoom"><select aria-label="缩放级别"><option>100%</option></select><i></i></span><hr>
          ${this.tb("launch", "应用程序启动器")}<button class="drop" aria-label="启动器列表"><i class="tri"></i></button>
          ${this.tb("web", "图形社区")}
        </div>
      </div>

      <div class="prop" role="toolbar">
        <span class="grip"></span>
        ${this.renderProps()}
      </div>

      <div class="work">
        <div class="tools" role="toolbar">
          <hr class="cap">
          ${this.tool("pick", "挑选", false)}${this.tool("shape", "形状")}${this.tool("zoom", "缩放")}${this.tool("draw", "手绘")}
          ${this.tool("rect", "矩形")}${this.tool("ellipse", "椭圆", true, true)}${this.tool("poly", "多边形")}${this.tool("basic", "基本形状")}
          ${this.tool("text", "文本", false)}<hr>
          <span class="gap"></span>${this.tool("blend", "交互式调和")}<hr>
          <span class="gap"></span>${this.tool("dropper", "滴管")}${this.tool("nib", "轮廓")}${this.tool("fill", "填充")}${this.tool("ifill", "交互式填充")}
          <hr>
        </div>

        <main class="doc">
          <div class="corner"><svg width="12" height="12" viewBox="0 0 12 12"><path d="M0 3.500h11M3.500 0v11" stroke="#000" stroke-dasharray="1 1"/><path d="M5 5l5 5M10 6v4H6" stroke="#000" fill="none"/></svg></div>
          <unit-ruler class="hr"></unit-ruler>
          <unit-ruler class="vr" vertical></unit-ruler>
          <div class="canvas">
            <svg width="100%" height="100%">
              <g transform="translate(-47 -134)" fill="none" stroke="#333">
                <path d="M329 134L641 233"/>
                <path d="M562 249.500L825 325.500L725 449.500H399L299 325.500z"/>
                <ellipse cx="1312.500" cy="414.500" rx="287.500" ry="143.500"/>
                <path d="M1309.500 411.500l6 6M1315.500 411.500l-6 6" stroke="#000" stroke-width="1.500"/>
                <rect x="1312.500" y="269.500" width="3" height="3" fill="#fff"/>
                ${this.handles.map(([x, y]) => svg`<rect x=${x - 3} y=${y - 3} width="7" height="7" fill="#000" stroke="none"></rect>`)}
              </g>
            </svg>
          </div>
          <div class="vs"><i class="arr up"></i><i class="thumb"></i><i class="arr dn"></i></div>
          <div class="pages">
            <div class="pnav">
              <div class="nums">
                <button aria-label="第一页"><svg width="8" height="9"><path d="M1.500 0v9" stroke="#000" stroke-width="1.500"/><path d="M8 0v9L3 4.500z"/></svg></button>
                <button aria-label="在前添加页"><svg width="8" height="8"><path d="M4 0v8M0 4h8" stroke="#000" stroke-width="2"/></svg></button>
                <span>1 / 1</span>
                <button aria-label="在后添加页"><svg width="8" height="8"><path d="M4 0v8M0 4h8" stroke="#000" stroke-width="2"/></svg></button>
                <button aria-label="最后一页"><svg width="8" height="9"><path d="M6.500 0v9" stroke="#000" stroke-width="1.500"/><path d="M0 0v9l5-4.500z"/></svg></button>
              </div>
              <div class="ptab"><svg width="65" height="17"><path d="M0 0L7 15.500H57L65 0z" fill="#fff"/><path d="M0 .5L7 15.500H57L65 .5" fill="none" stroke="#000"/></svg><a href="#">页 1</a></div>
            </div>
            <div class="split"></div>
            <div class="hs"><i class="arr lf"></i><i class="thumb"></i><i class="arr rt"></i></div>
          </div>
          <button class="nav" aria-label="导航器"></button>
        </main>

        <aside class="pal">
          <span class="cap"></span>
          <button class="opts" aria-label="调色板选项"><svg width="14" height="14"><path d="M.5.500h13v13H.5z" fill="#fff" stroke="#000"/><path d="M2.500 3.500h3v2h-3zM2.500 8.500h3v3h-3z" fill="none" stroke="#000"/><path d="M7 3.500h5M7 5.500h4M7 8.500h5" stroke="#000"/><path d="M12 7v5H7z"/></svg></button>
          <i class="arr up"></i>
          <ul>
            <li><button aria-label="无填充"><svg width="16" height="16"><path d="M1.500 1.500h13v13h-13z" fill="#fff" stroke="#000" stroke-width="2"/><path d="M3 3l10 10M13 3L3 13" stroke="#000"/></svg></button></li>
            ${PALETTE.map((c) => html`<li><button aria-label="#${c}" style="background:#${c}"></button></li>`)}
          </ul>
          <i class="arr dn"></i>
          <svg width="8" height="8"><path d="M1 0v8" stroke="#000" stroke-width="1.500"/><path d="M7 0v8L2.500 4z"/></svg>
        </aside>
      </div>

      <footer class="status">
        <div>
          <p>${mix("宽度:  251.411  高度:  126.366  中心:  (276.937, 22884.932)  毫... 椭圆 图层 1")}</p>
          <p>${mix("( -286.867, 228... 双击工具可打开工具箱选项；按住 Ctrl 键拖动可限制为圆形；按住 Shift 键拖动可从中心绘制")}</p>
        </div>
        <div class="info">${icon("fill")}<span>无</span><svg class="none" width="30" height="14"><path d="M5 2l20 10M25 2L5 12" stroke="#000"/></svg></div>
      </footer>

      <div class="nibpos">${icon("nib")}</div>
      <div class="ime">
        <svg class="logo" width="28" height="27" viewBox="0 0 28 27"><path d="M3 4L22 1q2 0 2 2l2 17q0 2-2 2L6 26q-2 0-2-2L1 6q0-2 2-2z" fill="#e8501e"/><path d="M20 7C15 5 7 6 8 10s12 2 11 6-8 4-12 2" fill="none" stroke="#fff" stroke-width="3.500"/></svg>
        ${this.renderIme()}
      </div>

      <div class="mark">
        <svg width="57" height="56" viewBox="0 0 57 56"><path d="M0 36L11 14C20 3 38-1 51 6l4 8c-6 12-14 18-26 21C18 37 8 37 1 38z" fill="#1f7fc0"/><path d="M2 40c16 0 34-2 43-12 4-5 8-6 11-7 2 14-8 28-23 34V45h-8v7C14 50 6 46 2 40z" fill="#f08a2c"/><path d="M11 34V21H8l5-8h7v-3h5v24zM26 36V20h-3l2-6h9l4-6h10l-8 8v12l-9 6V19h-2v16z" fill="#fff"/></svg>
        <div><strong>河东软件园</strong><span>www.pc0359.cn</span></div>
      </div>
      <button class="upload">
        <b><svg width="21" height="17" viewBox="0 0 21 17" fill="none" stroke="#fff" stroke-width="2.600"><circle cx="10.500" cy="5" r="3.500"/><circle cx="5" cy="11.500" r="3.500"/><path d="M12 7.500l5 2a3.500 3.500 0 1 1-4 5"/></svg></b><span>拖拽上传</span>
      </button>
      <hue-dialog></hue-dialog>`;
  }

  private renderProps() {
    const spin = (label: string) => html`<span class="sp"><input .value=${"90.0"} aria-label=${label}><button tabindex="-1" aria-label="减小"><i></i></button><button tabindex="-1" aria-label="增大"><i class="up"></i></button></span>`;
    return html`
      <div class="stack w24"><label for="px">x:</label><label for="py">y:</label></div>
      <div class="stack w64"><input id="px" .value=${"276.937 mm"}><input id="py" .value=${"22884.932"}></div>
      <div class="stack w22">${icon("width", 13)}${icon("height", 13)}</div>
      <div class="stack w58"><input aria-label="宽度" .value=${"251.411 mm"}><input aria-label="高度" .value=${"126.366 mm"}></div>
      <hr class="m6">
      <div class="stack w34"><input id="sx" .value=${"100.0"}><input id="sy" .value=${"100.0"}></div>
      <div class="stack w16"><label for="sx">%</label><label for="sy">%</label></div>
      <button class="tb" aria-label="锁定比例">${icon("lock", 15)}</button>
      <hr class="m6">
      <label for="rot">${icon("rotate")}</label>
      <input id="rot" class="rot" .value=${".0"}><span class="deg">°</span>
      <hr class="m6">
      <div class="stack w18"><button aria-label="水平镜像">${icon("mirrorh", 15)}</button><button aria-label="垂直镜像">${icon("mirrorv", 13)}</button></div>
      <hr>
      <button class="tb pressed" aria-label="椭圆">${icon("ellipse")}</button>${this.tb("pie", "饼形")}${this.tb("arc", "弧形")}
      <hr>
      <div class="stack w18">${icon("ang1", 13)}${icon("ang2", 13)}</div>
      <div class="stack">${spin("起始角")}${spin("终止角")}</div>
      <div class="stack w18"><span class="o">°</span><span class="o">°</span></div>
      <hr>${this.tb("cw", "顺时针")}<hr>${this.tb("wrap", "文本绕排")}<hr class="m1">
      ${this.tb("pen", "轮廓宽度")}
      <span class="combo line"><select aria-label="轮廓宽度"><option>发丝</option></select><i></i></span>
      <hr>${this.tb("front", "到前部")}${this.tb("back", "到后部")}<hr class="m1">${this.tb("curves", "转换为曲线")}<span></span>`;
  }

  private renderIme() {
    return html`
      <svg width="14" height="14" fill="none" stroke="#1f74c0" stroke-width="2"><path d="M1 3.500h12v5H1zM7 0v14"/></svg>
      <svg width="14" height="14"><path d="M9 0c2 6-3 11-9 9 3 6 13 6 14-2 0-3-2-6-5-7z" fill="#1f74c0"/></svg>
      <svg width="13" height="14"><circle cx="3" cy="4" r="2" fill="none" stroke="#1f74c0" stroke-width="1.500"/><path d="M8 8h4c0 3-1 5-4 6l2-3H8z" fill="#1f74c0"/></svg>
      <svg width="13" height="15"><rect x="4" y="0" width="5" height="9" rx="2.500" fill="#1f74c0"/><path d="M1 6c0 7 11 7 11 0M6.500 11v3M3 14h7" fill="none" stroke="#1f74c0" stroke-width="1.500"/></svg>
      <svg width="16" height="12"><rect width="16" height="12" rx="1" fill="#1f74c0"/><path d="M2 3.500h12M2 6.500h12" stroke="#fff" stroke-width="1.500" stroke-dasharray="2 1"/><path d="M4 9.500h8" stroke="#fff" stroke-width="1.500"/></svg>
      <svg width="15" height="15" fill="#b4bccb"><circle cx="6" cy="3.500" r="3.500"/><path d="M0 13c0-7 12-7 12 0z"/><path d="M7.500 8.500h7v6h-7z" stroke="#fff"/></svg>
      <svg width="15" height="13"><path d="M4 0c1 2 6 2 7 0l4 3-2 3-2-1v8H4V5L2 6 0 3z" fill="#1f74c0"/></svg>
      <svg width="15" height="15"><path d="M2 13L9 6" stroke="#1f74c0" stroke-width="3" stroke-linecap="round"/><path d="M13 1l-3 3 1 1 3-2c1 4-2 6-5 5-3-2-2-7 4-7z" fill="#1f74c0"/></svg>`;
  }
}
